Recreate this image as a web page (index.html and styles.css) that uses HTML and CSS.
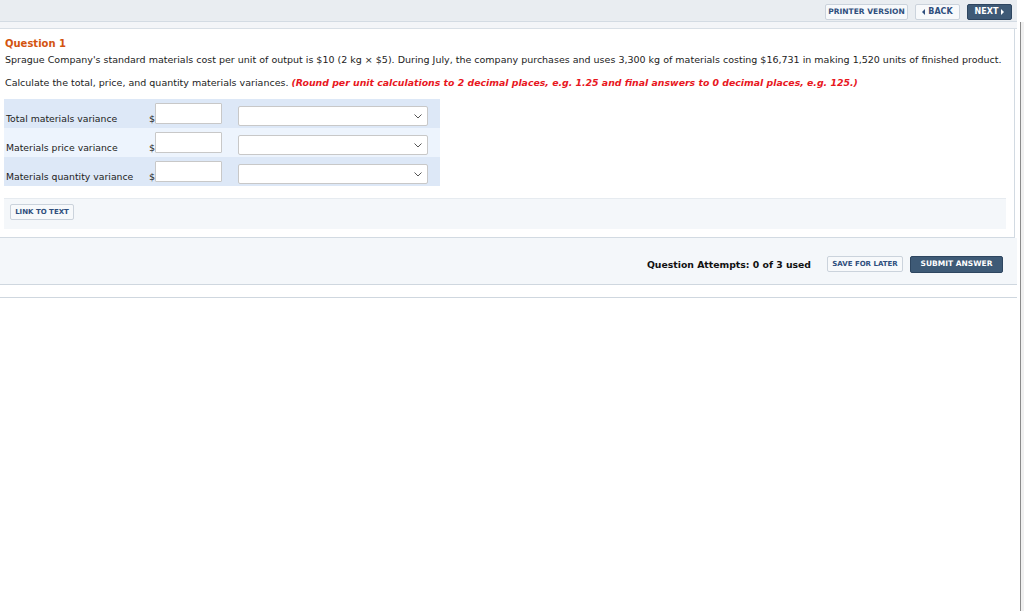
FILE: index.html
```html
<!DOCTYPE html>
<html>
<head>
<meta charset="utf-8">
<link rel="stylesheet" href="styles.css">
</head>
<body>
<div class="page">
  <div class="main">
    <div class="topbar">
      <button class="btn btn-light btn-print">PRINTER VERSION</button>
      <button class="btn btn-light btn-back"><span class="tri tri-left"></span>BACK</button>
      <button class="btn btn-dark btn-next">NEXT<span class="tri tri-right"></span></button>
    </div>
    <div class="strip"></div>
    <div class="card">
      <div class="qtitle">Question 1</div>
      <p class="qtext">Sprague Company's standard materials cost per unit of output is $10 (2 kg × $5). During July, the company purchases and uses 3,300 kg of materials costing $16,731 in making 1,520 units of finished product.</p>
      <p class="qtext2">Calculate the total, price, and quantity materials variances. <em class="note">(Round per unit calculations to 2 decimal places, e.g. 1.25 and final answers to 0 decimal places, e.g. 125.)</em></p>
      <div class="answers">
        <div class="row row-a">
          <span class="label">Total materials variance</span>
          <span class="dollar">$</span><span class="inp"></span>
          <span class="sel"><svg width="8" height="5" viewBox="0 0 8 5"><path d="M0.5 0.5 L4 4 L7.5 0.5" fill="none" stroke="#555" stroke-width="1"/></svg></span>
        </div>
        <div class="row row-b">
          <span class="label">Materials price variance</span>
          <span class="dollar">$</span><span class="inp"></span>
          <span class="sel"><svg width="8" height="5" viewBox="0 0 8 5"><path d="M0.5 0.5 L4 4 L7.5 0.5" fill="none" stroke="#555" stroke-width="1"/></svg></span>
        </div>
        <div class="row row-a">
          <span class="label">Materials quantity variance</span>
          <span class="dollar">$</span><span class="inp"></span>
          <span class="sel"><svg width="8" height="5" viewBox="0 0 8 5"><path d="M0.5 0.5 L4 4 L7.5 0.5" fill="none" stroke="#555" stroke-width="1"/></svg></span>
        </div>
      </div>
      <div class="links">
        <button class="btn btn-light btn-link">LINK TO TEXT</button>
      </div>
    </div>
    <div class="footer">
      <span class="attempts">Question Attempts: 0 of 3 used</span>
      <button class="btn btn-light btn-save">SAVE FOR LATER</button>
      <button class="btn btn-dark btn-submit">SUBMIT ANSWER</button>
    </div>
    <div class="gap"></div>
  </div>
  <div class="sidebar"></div>
</div>
</body>
</html>
```

FILE: styles.css
```css
html, body {
  margin: 0;
  padding: 0;
  background: #ffffff;
}
body {
  font-family: "DejaVu Sans", Verdana, sans-serif;
  font-size: 9.5px;
  color: #222;
}
.page {
  display: flex;
  width: 1024px;
  height: 611px;
}
.main {
  width: 1017px;
  display: flex;
  flex-direction: column;
}
.sidebar {
  width: 3px;
  margin-left: 3px;
  margin-top: 22px;
  border-left: 1px solid #8a8a8a;
  background: #f0f0f0;
  height: 589px;
}
.topbar {
  height: 22px;
  box-sizing: border-box;
  background: #e9edf1;
  border-bottom: 1px solid #d3dbe3;
  display: flex;
  justify-content: flex-end;
  align-items: center;
  gap: 7px;
  padding-right: 5px;
  padding-top: 2px;
}
.strip {
  height: 6px;
  background: #f3f5f8;
  border-bottom: 1px solid #d8dfe6;
}
.btn {
  font-family: "DejaVu Sans", Verdana, sans-serif;
  font-weight: bold;
  font-size: 7.5px;
  height: 16px;
  padding: 0;
  border-radius: 2px;
  display: inline-flex;
  align-items: center;
  justify-content: center;
  line-height: 1;
  white-space: nowrap;
  cursor: pointer;
}
.btn-light {
  background: #f7f9fb;
  border: 1px solid #cbd3dc;
  color: #2f4f7d;
}
.btn-dark {
  background: #3e5a76;
  border: 1px solid #2e4660;
  color: #ffffff;
}
.btn-print { width: 83px; }
.btn-back { width: 45px; font-size: 8px; }
.btn-next { width: 45px; font-size: 8px; }
.tri {
  display: inline-block;
  width: 0;
  height: 0;
  border-top: 3px solid transparent;
  border-bottom: 3px solid transparent;
}
.tri-left { border-right: 3px solid #2f4f7d; margin-right: 3px; }
.tri-right { border-left: 3px solid #ffffff; margin-left: 3px; }
.card {
  background: #fff;
  border-right: 1px solid #d2dae2;
  border-bottom: 1px solid #d2dae2;
  padding: 9px 8px 8px 4px;
  margin-right: 2px;
}
.qtitle {
  color: #d3540f;
  font-weight: bold;
  font-size: 10px;
  margin-left: 1px;
  height: 13px;
}
.qtext {
  margin: 3px 0 0 1px;
  line-height: 12px;
}
.qtext2 {
  margin: 11px 0 0 1px;
  line-height: 12px;
}
.note {
  color: #e8171e;
  font-weight: bold;
  font-size: 9.35px;
}
.answers {
  width: 436px;
  margin-top: 10px;
}
.row {
  height: 29px;
  display: flex;
  align-items: flex-end;
  padding-bottom: 3px;
  box-sizing: border-box;
}
.row-a { background: #dde8f7; }
.row-b { background: #edf4fd; }
.label {
  width: 143px;
  padding-left: 2px;
  padding-bottom: 1px;
  font-size: 9.3px;
}
.dollar {
  width: 6px;
  padding-bottom: 1px;
}
.inp {
  width: 67px;
  height: 21px;
  background: #fff;
  border: 1px solid #c8c8c8;
  box-sizing: border-box;
  border-radius: 1px;
  align-self: flex-start;
  margin-top: 4px;
}
.sel {
  width: 190px;
  height: 20px;
  margin-left: 16px;
  background: #fff;
  border: 1px solid #c8c8c8;
  border-radius: 2px;
  box-sizing: border-box;
  display: flex;
  justify-content: flex-end;
  align-items: center;
  padding-right: 5px;
}
.row .sel { margin-bottom: -1px; }
.links {
  margin-top: 12px;
  background: #f4f7fa;
  border-top: 1px solid #e6ebf0;
  height: 31px;
  padding: 5px 0 0 6px;
  box-sizing: border-box;
}
.btn-link {
  width: 64px;
  height: 16px;
  font-size: 7px;
}
.footer {
  background: #f4f7fa;
  height: 47px;
  border-bottom: 1px solid #cfd7df;
  display: flex;
  align-items: center;
  justify-content: flex-end;
  padding-right: 14px;
  padding-top: 6px;
  box-sizing: border-box;
}
.attempts {
  font-weight: bold;
  font-size: 9.3px;
  color: #111;
  margin-right: 16px;
}
.btn-save {
  width: 76px;
  height: 16px;
  font-size: 7px;
  margin-right: 7px;
}
.btn-submit {
  width: 93px;
  height: 17px;
  font-size: 7.5px;
}
.gap {
  height: 12px;
  border-bottom: 1px solid #cfd7df;
}
```
